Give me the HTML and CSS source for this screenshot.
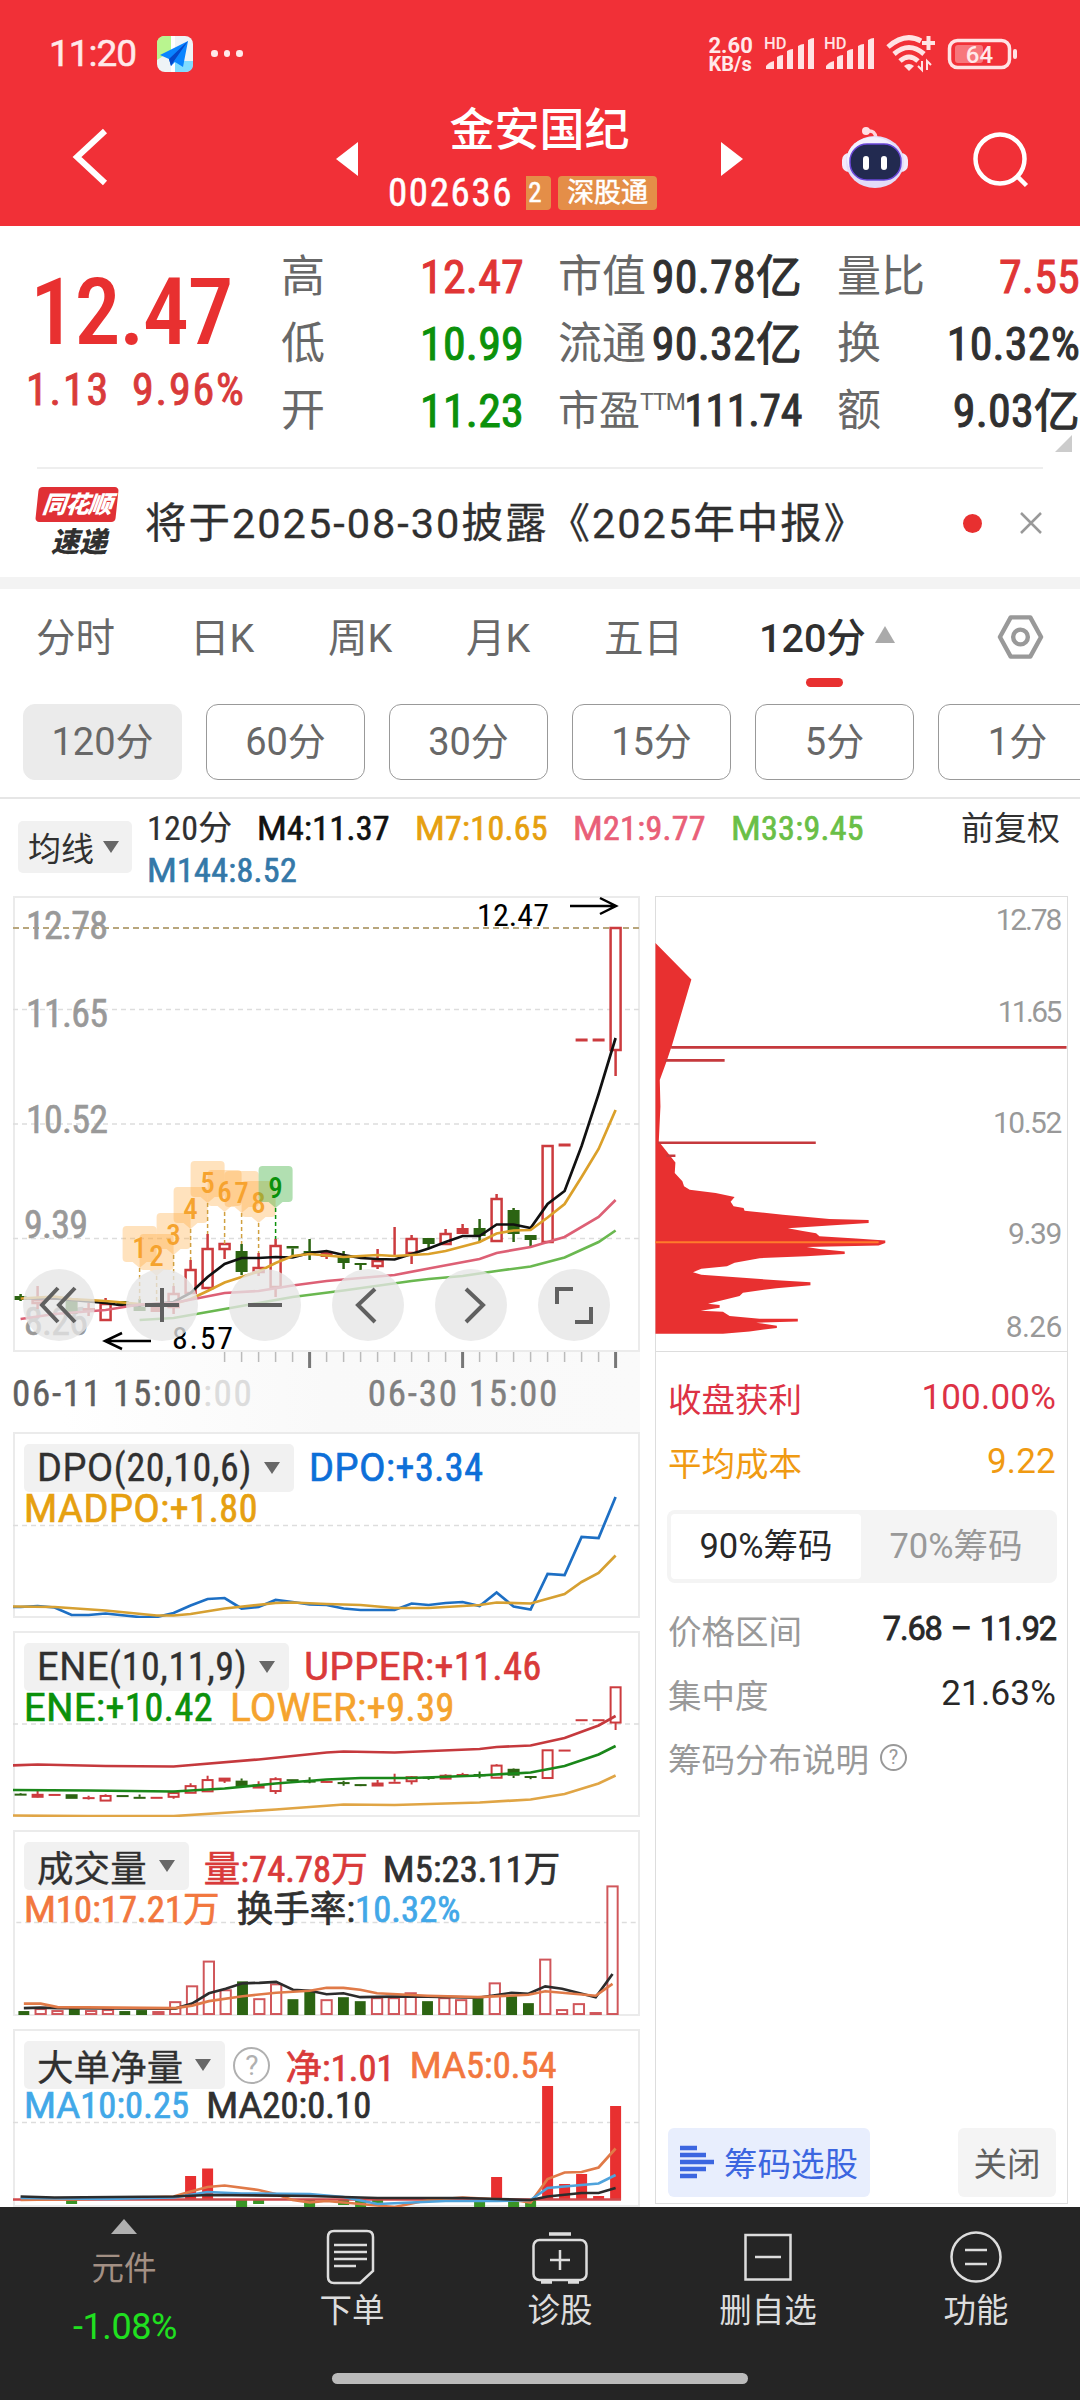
FILE: index.html
```
<!DOCTYPE html>
<html lang="zh-CN">
<head>
  <meta charset="UTF-8" />
  <meta name="viewport" content="width=device-width, initial-scale=1.0"/>
  <title>金安国纪 002636</title>
  <link rel="stylesheet" href="styles.css">
</head>
<body>

  <!-- Header -->
  <header>
    <div class="status-bar">
      <span class="clock">11:20</span>
      <svg class="map-icon" viewBox="0 0 36 36">
        <rect width="36" height="36" rx="8" fill="#eef3f6"/>
        <path d="M8 0H14V15L0 24V8Q0 0 8 0Z" fill="#b9f58f"/>
        <path d="M18 25H36V28Q36 36 28 36H18Z" fill="#7fdcff"/>
        <path d="M14 0H18V36H14Z" fill="#fff"/>
        <path d="M31 5L3 19L12 23L14 30L18 26L26 31Z" fill="#0a84ff"/>
        <path d="M31 5L12 23L14 30L17 25Z" fill="#0546c8"/>
      </svg>
      <span class="dots"><i></i><i></i><i></i></span>
      <span class="net-speed"><b>2.60</b><b>KB/s</b></span>
      <svg class="signal" viewBox="0 0 312 40">
        <g fill="#ffe3e4">
          <text x="0" y="13" class="hd">HD</text>
          <path d="M2 33v-3q3-4 8-5v8zM13 33V21q3-2 6-2v14zM23 33V15q3-2 6-2v20zM34 33V10q3-2 6-2v25zM44 33V4q3-2 6-2v31z"/>
          <text x="60" y="13" class="hd">HD</text>
          <path d="M62 33v-3q3-4 8-5v8zM73 33V21q3-2 6-2v14zM83 33V15q3-2 6-2v20zM94 33V10q3-2 6-2v25zM104 33V4q3-2 6-2v31z"/>
          <path d="M145 35l-5-5q5-4 10 0z"/>
          <path d="M158 25v9l-4-4M163 34v-9l4 4" stroke="#ffe3e4" stroke-width="2" fill="none"/>
        </g>
        <g fill="none" stroke="#ffe3e4" stroke-width="5">
          <path d="M124 11q17-15 33-6M130 18q15-13 30 0M136 25q9-8 18 0"/>
          <path d="M158 7h13M164.500 0v14" stroke-width="4"/>
        </g>
        <rect x="185.500" y="4.500" width="60" height="27" rx="8" fill="none" stroke="#ffe3e4" stroke-width="3.500"/>
        <rect x="191" y="9" width="28" height="18" rx="3" fill="#f7777c"/>
        <rect x="249" y="13" width="4" height="10" rx="2" fill="#ffe3e4"/>
        <text x="215.500" y="26.500" class="battery">64</text>
      </svg>
    </div>
    <div class="title-bar">
      <svg class="back" viewBox="0 0 40 60"><path d="M34 4L6 30L34 56"/></svg>
      <i class="prev"></i>
      <div class="title">
        <h1>金安国纪</h1>
        <div class="code">002636<em class="cut">2</em><em>深股通</em></div>
      </div>
      <i class="next"></i>
      <svg class="robot" viewBox="0 0 68 62">
        <path d="M35 12Q34 4 27 5" fill="none" stroke="#ffd6dd" stroke-width="3.500"/>
        <circle cx="25" cy="5" r="4" fill="#ffe0e6"/>
        <rect x="1" y="27" width="66" height="19" rx="7" fill="#f3e9fb"/>
        <ellipse cx="34" cy="36" rx="29" ry="26" fill="#e3dcf8"/>
        <ellipse cx="32" cy="33" rx="26" ry="22" fill="#f3f1fe"/>
        <rect x="9" y="18" width="51" height="36" rx="17" fill="#222a50" stroke="#6a47d8" stroke-width="1.500"/>
        <path d="M25 33v8M43 33v8" stroke="#fff" stroke-width="6" stroke-linecap="round"/>
      </svg>
      <svg class="search" viewBox="0 0 60 60"><circle cx="28" cy="28" r="24.500"/><path d="M45 45L54.500 54.500"/></svg>
    </div>
  </header>

  <!-- Quote -->
  <section class="quote">
    <div class="price">
      <strong>12.47</strong>
      <div><span>1.13</span><span>9.96%</span></div>
    </div>
    <dl class="col-a">
      <dt>高</dt><dd class="up">12.47</dd>
      <dt>低</dt><dd class="down">10.99</dd>
      <dt>开</dt><dd class="down">11.23</dd>
    </dl>
    <dl class="col-b">
      <dt>市值</dt><dd>90.78亿</dd>
      <dt>流通</dt><dd>90.32亿</dd>
      <dt class="ttm">市盈<sup>TTM</sup></dt><dd class="pe">111.74</dd>
    </dl>
    <dl class="col-c">
      <dt>量比</dt><dd class="up">7.55</dd>
      <dt>换</dt><dd>10.32%</dd>
      <dt>额</dt><dd>9.03亿</dd>
    </dl>
    <i class="corner"></i>
  </section>

  <!-- News -->
  <section class="news">
    <div class="news-logo"><b>同花顺</b><span>速递</span></div>
    <p>将于2025-08-30披露《2025年中报》</p>
    <i class="red-dot"></i>
    <svg class="close" viewBox="0 0 24 24"><path d="M2 2L22 22M22 2L2 22"/></svg>
  </section>

  <!-- Period tabs -->
  <nav class="tabs">
    <a>分时</a><a>日K</a><a>周K</a><a>月K</a><a>五日</a><a class="active">120分</a>
    <i class="tri-up"></i>
    <svg class="setting" viewBox="0 0 48 46"><path d="M14 3H34L45 23L34 43H14L3 23Z"/><circle cx="24" cy="23" r="7.500"/></svg>
  </nav>
  <div class="periods">
    <a class="active">120分</a><a>60分</a><a>30分</a><a>15分</a><a>5分</a><a>1分</a>
  </div>

  <!-- Moving average legend -->
  <div class="legend">
    <span class="chip">均线<i class="tri"></i></span>
    <div class="legend-items">
      <span class="c-dark">120分</span><span class="c-black"><b>M</b>4:11.37</span><span class="c-gold"><b>M</b>7:10.65</span><span class="c-pink"><b>M</b>21:9.77</span><span class="c-lime"><b>M</b>33:9.45</span><span class="c-steel"><b>M</b>144:8.52</span>
    </div>
    <span class="fq">前复权</span>
  </div>

  <!-- Charts -->
  <main>
    <div class="left">
      <div class="panel kline">
        <svg id="kline" viewBox="13 896 627 456"></svg>
        <div class="tools">
          <button><svg viewBox="0 0 72 72"><path d="M35 19L19 36L35 53M52 19L36 36L52 53"/></svg></button>
          <button><svg viewBox="0 0 72 72"><path d="M36 19V53M19 36H53"/></svg></button>
          <button><svg viewBox="0 0 72 72"><path d="M19 36H53"/></svg></button>
          <button><svg viewBox="0 0 72 72"><path d="M43 20L26 36L43 53"/></svg></button>
          <button><svg viewBox="0 0 72 72"><path d="M31 20L48 36L31 53"/></svg></button>
          <button><svg viewBox="0 0 72 72"><path d="M19 35V20H35M37 53H53V38"/></svg></button>
        </div>
      </div>
      <div class="axis">
        <svg id="ticks" viewBox="13 1352 627 18"></svg>
        <div class="dates"><span>06-11 15:00<s>:00</s></span><span class="d2">06-30 15:00</span></div>
      </div>

      <div class="panel">
        <svg id="dpo" viewBox="13 1432 627 186"></svg>
        <div class="info">
          <span class="chip"><span><b>DPO</b>(20,10,6)</span><i class="tri"></i></span><span class="c-blue"><b>DPO</b>:+3.34</span>
        </div>
        <div class="info"><span class="c-gold"><b>MADPO</b>:+1.80</span></div>
      </div>

      <div class="panel">
        <svg id="ene" viewBox="13 1631 627 186"></svg>
        <div class="info">
          <span class="chip"><span><b>ENE</b>(10,11,9)</span><i class="tri"></i></span><span class="c-red"><b>UPPER</b>:+11.46</span>
        </div>
        <div class="info"><span class="c-green"><b>ENE</b>:+10.42</span><span class="c-amber"><b>LOWER</b>:+9.39</span></div>
      </div>

      <div class="panel">
        <svg id="vol" viewBox="13 1830 627 188"></svg>
        <div class="info num">
          <span class="chip">成交量<i class="tri"></i></span><span class="c-red">量:74.78万</span><span class="c-dark"><b>M</b>5:23.11万</span>
        </div>
        <div class="info num"><span class="c-orange"><b>M</b>10:17.21万</span><span class="c-dark">换手率:<span class="c-sky">10.32%</span></span></div>
      </div>

      <div class="panel last">
        <svg id="net" viewBox="13 2029 627 178"></svg>
        <div class="info num">
          <span class="chip">大单净量<i class="tri"></i></span><i class="help">?</i><span class="c-red">净:1.01</span><span class="c-orange"><b>MA</b>5:0.54</span>
        </div>
        <div class="info num"><span class="c-sky"><b>MA</b>10:0.25</span><span class="c-dark"><b>MA</b>20:0.10</span></div>
      </div>
    </div>

    <!-- Chip distribution -->
    <aside>
      <svg class="chips" viewBox="47 47 1236 1368">
        <path fill="#e83030" d="M47 188L155 298L97 495L80 545L60 600L62 680L57 785L88 824L107 848L105 880L128 905L133 920L150 930L228 940L285 952L273 966L282 980L312 985L315 993L430 1005L570 1018L688 1021V1030L570 1038L445 1046L490 1054L530 1061L540 1070L650 1077L738 1083V1090L718 1098L502 1102L540 1108L616 1116V1123L500 1130L360 1136L285 1150L262 1160L185 1168L160 1178L185 1186L310 1195L425 1203L513 1208V1217L410 1226L310 1240L300 1250L245 1263L205 1273L240 1277V1285L183 1294L250 1297L270 1310L360 1318H475V1326L350 1330L412 1339V1346L330 1356L250 1363H47Z"/>
        <path stroke="#c5393d" stroke-width="8" d="M94 502H1283M76 541H255M55 789H529M80 828H107"/>
        <path stroke="#ff7a2b" stroke-width="6" d="M47 1088H718"/>
        <g class="chip-label">
          <text x="1270" y="150" textLength="200">12.78</text>
          <text x="1270" y="427" textLength="194">11.65</text>
          <text x="1270" y="760" textLength="208">10.52</text>
          <text x="1270" y="1092" textLength="163">9.39</text>
          <text x="1270" y="1372" textLength="170">8.26</text>
        </g>
      </svg>
      <div class="stats">
        <div class="row c-crimson"><span>收盘获利</span><b>100.00%</b></div>
        <div class="row c-cost"><span>平均成本</span><b>9.22</b></div>
        <div class="seg"><a class="active">90%筹码</a><a>70%筹码</a></div>
        <div class="row"><span>价格区间</span><b class="range">7.68 – 11.92</b></div>
        <div class="row"><span>集中度</span><b>21.63%</b></div>
        <div class="row"><span>筹码分布说明<i class="help small">?</i></span></div>
      </div>
      <div class="actions">
        <button class="pick">
          <svg viewBox="0 0 34 34"><path d="M0 3H17M0 10H26M0 17H34M0 24H26M0 31H17"/></svg>筹码选股
        </button>
        <button class="off">关闭</button>
      </div>
    </aside>
  </main>

  <!-- Bottom bar -->
  <footer>
    <div class="item sector"><i class="tri-up"></i><span>元件</span><b>-1.08%</b></div>
    <div class="item">
      <svg viewBox="0 0 60 60"><path d="M12 4H45Q51 4 51 10V44L38 56H12Q6 56 6 50V10Q6 4 12 4Z"/><path d="M12 18H45M12 25H45M12 32H45M12 39H34"/></svg>
      <span>下单</span>
    </div>
    <div class="item">
      <svg viewBox="0 0 60 60"><rect x="3.500" y="13" width="53" height="40" rx="6"/><path d="M19 7H41M11 55H22M38 55H49" stroke-width="3.500"/><path d="M30 23V43M20 33H40"/></svg>
      <span>诊股</span>
    </div>
    <div class="item">
      <svg viewBox="0 0 60 60"><rect x="7.500" y="8" width="45" height="44.500"/><path d="M17 30H43"/></svg>
      <span>删自选</span>
    </div>
    <div class="item">
      <svg viewBox="0 0 60 60"><circle cx="30" cy="30" r="24.500"/><path d="M19 23H41M19 37H41"/></svg>
      <span>功能</span>
    </div>
    <i class="home"></i>
  </footer>

  <script src="charts.js"></script>
</body>
</html>
```
FILE: styles.css
```
* {
  margin: 0;
  padding: 0;
  box-sizing: border-box;
}
body {
  width: 1080px;
  height: 2400px;
  overflow: hidden;
  background: #fff;
  color: #303030;
  font-family: "Roboto Condensed", "Noto Sans CJK SC", sans-serif;
}
i, em {
  font-style: normal;
}
svg {
  display: block;
}
button {
  border: none;
  font-family: inherit;
}

/* Header */
header {
  height: 226px;
  background: #f13037;
  color: #fff;
}
.status-bar {
  height: 73px;
  padding: 34px 0 0 49px;
  display: flex;
  align-items: center;
  color: #ffe9ea;
}
.clock {
  width: 108px;
  font: 400 37px Roboto, sans-serif;
  letter-spacing: -1px;
  -webkit-text-stroke: .5px;
}
.map-icon {
  width: 36px;
  height: 36px;
}
.dots {
  display: flex;
  gap: 6px;
  margin-left: 18px;
}
.dots i {
  width: 6.500px;
  height: 6.500px;
  border-radius: 50%;
  background: #ffe9ea;
}
.net-speed {
  margin-left: 466px;
  width: 55px;
  font: 20px/19px Roboto, sans-serif;
  padding-top: 3px;
}
.net-speed b {
  display: block;
  font-weight: 700;
  white-space: nowrap;
}
.net-speed b:first-child {
  font-size: 22px;
}
.signal {
  width: 312px;
  height: 40px;
  margin-top: 4px;
  flex: none;
  overflow: visible;
}
.hd {
  font: 500 16.500px Roboto, sans-serif;
}
.battery {
  font: 500 24px Roboto, sans-serif;
  fill: #ffe9ea;
  text-anchor: middle;
}
.title-bar {
  display: flex;
  align-items: flex-start;
  padding-left: 71px;
  height: 153px;
}
.back {
  width: 40px;
  height: 60px;
  margin-top: 54px;
  fill: none;
  stroke: #fff;
  stroke-width: 6px;
}
.prev, .next {
  margin-top: 69px;
  border: 17px solid transparent;
}
.prev {
  margin-left: 225px;
  border-left: none;
  border-right: 22px solid #fff;
}
.next {
  border-right: none;
  border-left: 22px solid #fff;
}
.title {
  width: 363px;
  text-align: center;
}
.title h1 {
  margin-top: 34px;
  font-size: 45px;
  line-height: 48px;
  font-weight: 500;
}
.code {
  display: flex;
  align-items: center;
  margin: 20px 0 0 30px;
  height: 36px;
  font-size: 39px;
  letter-spacing: 1.600px;
  -webkit-text-stroke: .5px;
}
.code em {
  height: 34px;
  margin-left: 7px;
  padding: 0 9px;
  border-radius: 4px;
  background: #e48e48;
  font-size: 27px;
  line-height: 34px;
  letter-spacing: 0;
}
.code .cut {
  margin-left: 13px;
  width: 25px;
  padding: 0 2px;
  border-radius: 0 4px 4px 0;
  text-align: left;
}
.robot {
  width: 68px;
  height: 62px;
  margin: 53px 0 0 98px;
}
.search {
  width: 60px;
  height: 60px;
  margin: 58px 0 0 63px;
  fill: none;
  stroke: #fff;
  stroke-width: 4.500px;
}

/* Quote */
.quote {
  position: relative;
  display: flex;
  height: 241px;
  padding-top: 18px;
}
.price {
  width: 281px;
  padding-left: 26px;
  color: #d93a3a;
}
.price strong {
  display: block;
  padding-left: 4px;
  margin-top: 19px;
  color: #e83030;
  font-size: 92px;
  line-height: 100px;
  font-weight: 500;
  letter-spacing: -1.500px;
}
.price div {
  display: flex;
  gap: 22px;
  margin-top: 2px;
  font-size: 44px;
  line-height: 50px;
  letter-spacing: 1.800px;
  -webkit-text-stroke: .9px;
}
dl {
  display: grid;
  grid-template-columns: 88px 1fr;
  grid-auto-rows: 67px;
  line-height: 66px;
  white-space: nowrap;
}
dt {
  color: #686868;
  font-size: 44px;
}
dd {
  text-align: right;
  font-size: 46px;
  letter-spacing: .2px;
  -webkit-text-stroke: 1px;
}
sup {
  font-size: 23px;
  line-height: 0;
  vertical-align: 15px;
  font-family: Roboto, sans-serif;
  letter-spacing: -1px;
}
.col-a {
  width: 243px;
}
.col-b {
  width: 244px;
  margin-left: 34px;
}
.ttm {
  font-size: 41px;
}
dd.pe {
  font-size: 44px;
  letter-spacing: -.4px;
}
.col-c {
  width: 243px;
  margin-left: 35px;
}
.up {
  color: #e03535;
}
.down {
  color: #0b910b;
}
.corner {
  position: absolute;
  right: 8px;
  bottom: 15px;
  border-left: 17px solid transparent;
  border-bottom: 17px solid #ccc;
}

/* News */
.news {
  display: flex;
  align-items: center;
  height: 110px;
  margin: 0 37px;
  border-top: 2px solid #eee;
}
.news-logo {
  width: 84px;
  margin-top: -4px;
  text-align: center;
  font-style: italic;
  font-family: "Noto Sans CJK SC", sans-serif;
}
.news-logo b {
  display: block;
  width: 80px;
  height: 35px;
  border-radius: 4px;
  background: #e03035;
  color: #fff;
  font-size: 24px;
  line-height: 32px;
  font-weight: 900;
  letter-spacing: -1px;
  transform: skewX(-6deg);
}
.news-logo span {
  display: block;
  margin-top: 2px;
  font-size: 28px;
  line-height: 32px;
  font-weight: 900;
}
.news p {
  margin: -7px 0 0 24px;
  width: 791px;
  font-size: 41.500px;
  letter-spacing: 2px;
  white-space: nowrap;
  font-family: Roboto, "Noto Sans CJK SC", sans-serif;
  -webkit-text-stroke: .3px;
}
.red-dot {
  width: 19px;
  height: 19px;
  flex: none;
  margin-left: 28px;
  border-radius: 50%;
  background: #e83030;
}
.close {
  width: 24px;
  height: 24px;
  flex: none;
  margin-left: 37px;
  stroke: #999;
  stroke-width: 2.500px;
}

/* Tabs */
.tabs {
  display: flex;
  align-items: center;
  height: 127px;
  padding: 0 36px 25px;
  border-top: 12px solid #f3f3f3;
  color: #686868;
  font-size: 39.500px;
  font-family: Roboto, "Noto Sans CJK SC", sans-serif;
}
.tabs a {
  width: 138px;
  flex: none;
}
.tabs a:nth-child(1) {
  width: 154px;
}
.tabs a:nth-child(5) {
  width: 155px;
}
.tabs .active {
  position: relative;
  width: 116px;
  color: #303030;
  font-weight: 500;
}
.tabs .active::after {
  content: "";
  position: absolute;
  left: 47px;
  bottom: -24px;
  width: 37px;
  height: 9px;
  border-radius: 5px;
  background: #e83030;
}
.tri-up {
  border: 10px solid transparent;
  border-top: none;
  border-bottom: 17px solid #aaa;
}
.setting {
  width: 48px;
  height: 46px;
  margin: 6px 0 0 102px;
  fill: none;
  stroke: #999;
  stroke-width: 4.500px;
  stroke-linejoin: round;
}
.periods {
  display: flex;
  gap: 24px;
  height: 95px;
  padding-left: 23px;
  border-bottom: 2px solid #e6e6e6;
}
.periods a {
  flex: none;
  width: 159px;
  height: 76px;
  border: 1.500px solid #999;
  border-radius: 12px;
  color: #686868;
  font: 38px/75px Roboto, "Noto Sans CJK SC", sans-serif;
  text-align: center;
}
.periods .active {
  border-color: #ebebeb;
  background: #ebebeb;
}

/* Legend */
.chip {
  display: flex;
  align-items: center;
  border-radius: 5px;
  background: #f1f1f1;
  color: #303030;
}
.tri {
  border: 8.500px solid transparent;
  border-bottom: none;
  border-top: 12px solid #686868;
}
.legend {
  display: flex;
  height: 97px;
  padding: 8px 20px 0 18px;
  font-size: 34px;
}
.legend .chip {
  width: 114px;
  height: 52px;
  margin: 14px 15px 0 0;
  padding-left: 10px;
  gap: 9px;
  font-size: 33px;
}
.legend-items {
  display: flex;
  flex-wrap: wrap;
  align-content: flex-start;
  width: 814px;
  line-height: 42px;
  letter-spacing: .3px;
  -webkit-text-stroke: .7px;
}
.legend-items span {
  width: 158px;
}
.legend-items span:first-child {
  width: 110px;
  -webkit-text-stroke: .2px;
}
.legend b, .info b {
  font-family: Roboto, sans-serif;
  font-weight: 400;
}
.fq {
  font-size: 33px;
  line-height: 43px;
  white-space: nowrap;
}

.c-dark { color: #303030; }
.c-black { color: #111; }
.c-gold { color: #e6a010; }
.c-pink { color: #e95f78; }
.c-lime { color: #6abf47; }
.c-steel { color: #3478a8; }
.c-blue { color: #0d6fd8; }
.c-red { color: #d93a3a; }
.c-green { color: #0b910b; }
.c-amber { color: #f5a32e; }
.c-orange { color: #f2773e; }
.c-sky { color: #42a8e8; }
.stats .c-crimson { color: #dd3245; }
.stats .c-cost { color: #f09a12; }

/* Charts */
main {
  display: flex;
  justify-content: space-between;
  height: 1311px;
  padding: 0 12px 0 13px;
}
.left {
  width: 627px;
}
.panel {
  position: relative;
  height: 186px;
  margin-bottom: 13px;
  padding-top: 12px;
  outline: 2px solid #ebebeb;
  outline-offset: -2px;
}
.panel > svg {
  position: absolute;
  left: 0;
  top: 0;
  width: 100%;
  height: 100%;
}
.kline {
  height: 456px;
  margin: 0;
}
.last {
  height: 178px;
  margin: 0;
}
.tools {
  position: absolute;
  left: 10px;
  top: 373px;
  display: flex;
  gap: 31px;
}
.tools button {
  width: 72px;
  height: 72px;
  border-radius: 50%;
  background: rgba(230, 230, 230, .78);
}
.tools svg {
  fill: none;
  stroke: #606060;
  stroke-width: 4px;
}
.axis {
  height: 80px;
  background: linear-gradient(90deg, #fff 8%, #f9f9f9 50%, #fafafa);
}
.axis svg {
  height: 18px;
}
.dates {
  display: flex;
  justify-content: space-between;
  margin: 2px 0 0 -1px;
  color: #606060;
  font-size: 37px;
  line-height: 44px;
  letter-spacing: 1.700px;
  -webkit-text-stroke: .4px;
}
.dates s {
  color: #dcdcdc;
  text-decoration: none;
}
.dates .d2 {
  margin-right: 81px;
  color: #808080;
}
.info {
  position: relative;
  display: flex;
  align-items: center;
  height: 34px;
  padding-left: 11px;
  gap: 17px;
  font-size: 38px;
  letter-spacing: .6px;
  white-space: nowrap;
  -webkit-text-stroke: .7px;
}
.info:nth-of-type(1) {
  height: 48px;
  gap: 15px;
}
.info .chip {
  height: 48px;
  padding: 0 14px 0 13px;
  gap: 12px;
  -webkit-text-stroke: .3px;
}
.num {
  height: 32px;
  font-size: 36.500px;
  letter-spacing: .1px;
}
.help {
  width: 37px;
  height: 37px;
  margin-left: -7px;
  border: 2px solid #b0b0b0;
  border-radius: 50%;
  color: #b0b0b0;
  font: 400 28px/33px Roboto, sans-serif;
  text-align: center;
  -webkit-text-stroke: 0;
}

/* Chart text */
.price-label {
  font-size: 38px;
  fill: #999;
  stroke: #999;
  stroke-width: .6px;
}
.mark {
  font-size: 32px;
  fill: #000;
}
.count {
  font-size: 29px;
  font-weight: 500;
  text-anchor: middle;
}

/* Chip distribution */
aside {
  position: relative;
  width: 413px;
  height: 1308px;
  border: 1.500px solid #ddd;
}
.chips {
  width: 412px;
  height: 456px;
  margin: -1px 0 0 -1px;
  border-bottom: 1.500px solid #ddd;
}
.chip-label {
  font: 90px Roboto, sans-serif;
  fill: #999;
  text-anchor: end;
}
.stats {
  padding: 13px 11px 0 12px;
  color: #999;
  font: 33.500px Roboto, "Noto Sans CJK SC", sans-serif;
}
.row {
  display: flex;
  justify-content: space-between;
  align-items: center;
  height: 64px;
}
.row span {
  display: flex;
  align-items: center;
}
.row b {
  font-size: 35px;
  font-weight: 400;
  letter-spacing: .2px;
}
.row:nth-child(n+3) b {
  color: #282828;
}
.row .range {
  font-size: 32.500px;
  letter-spacing: -1.100px;
  word-spacing: 2px;
  -webkit-text-stroke: .8px;
}
.seg {
  display: flex;
  height: 73px;
  margin: 17px -1px 14px;
  padding: 4px;
  border-radius: 8px;
  background: #f4f4f4;
}
.seg a {
  width: 190px;
  font-size: 34.500px;
  line-height: 65px;
  text-align: center;
}
.seg .active {
  border-radius: 4px;
  background: #fff;
  color: #282828;
}
.help.small {
  width: 27px;
  height: 27px;
  margin-left: 11px;
  border-color: #999;
  color: #999;
  font-size: 20px;
  line-height: 23px;
}
.actions {
  position: absolute;
  left: 12px;
  right: 11px;
  bottom: 6px;
  display: flex;
  justify-content: space-between;
}
.actions button {
  display: flex;
  align-items: center;
  justify-content: center;
  height: 69px;
  padding-bottom: 2px;
  border-radius: 6px;
  font-size: 33.500px;
}
.pick {
  width: 202px;
  gap: 10px;
  background: #e8eefd;
  color: #3c66e0;
}
.pick svg {
  width: 34px;
  stroke: #3c66e0;
  stroke-width: 4.500px;
}
.off {
  width: 98px;
  background: #f4f4f4;
  color: #606060;
}

/* Bottom bar */
footer {
  position: relative;
  display: flex;
  height: 193px;
  padding-left: 20px;
  background: #252525;
}
.item {
  width: 208px;
  padding-top: 20px;
  color: #ddd;
  font-size: 32.500px;
  line-height: 44px;
  text-align: center;
}
.item svg {
  width: 60px;
  height: 60px;
  margin: 0 auto 2px;
  fill: none;
  stroke: #ddd;
  stroke-width: 2.500px;
}
.item span {
  display: block;
}
.sector {
  margin-right: 20px;
  padding-top: 12px;
}
.sector .tri-up {
  display: block;
  width: 0;
  margin: 0 auto 13px;
  border-width: 0 13px 15px;
  border-bottom-color: #b0b0b0;
}
.sector span {
  color: #a39084;
}
.sector b {
  display: block;
  margin-top: 14px;
  padding-left: 2px;
  color: #20e020;
  font: 400 36px/44px Roboto, sans-serif;
  letter-spacing: -.4px;
}
.home {
  position: absolute;
  left: 332px;
  bottom: 16px;
  width: 416px;
  height: 11px;
  border-radius: 6px;
  background: #bbb;
}
```
FILE: charts.js
```
const RED = '#cc3b3e', GREEN = '#2c6412';
const X0 = 20.6, STEP = 17;
const x = i => X0 + STEP * i;

// [color, high, top, bottom, low]
const candles = [
  ['g', 1294, 1296, 1300, 1301], ['r', 1286, 1300, 1303, 1309], ['s', 1297, 1297, 1300, 1300],
  ['g', 1298, 1298, 1314, 1314], ['s', 1303, 1308, 1312, 1316], ['r', 1298, 1304, 1320, 1321],
  ['g', 1301, 1301, 1306, 1306], ['g', 1299, 1307, 1311, 1311], ['s', 1307, 1307, 1312, 1312],
  ['r', 1286, 1294, 1307, 1314], ['r', 1260, 1270, 1293, 1293], ['r', 1234, 1249, 1288, 1288],
  ['r', 1244, 1244, 1249, 1259], ['g', 1244, 1251, 1272, 1275], ['r', 1253, 1268, 1272, 1276],
  ['r', 1239, 1246, 1287, 1297], ['g', 1246, 1246, 1248.5, 1258], ['g', 1239, 1251, 1255, 1260],
  ['s', 1252, 1252, 1257, 1259], ['g', 1251, 1256, 1263, 1269], ['g', 1263, 1263, 1265, 1270],
  ['r', 1249, 1261, 1266, 1269], ['s', 1227, 1255, 1257, 1257], ['r', 1235, 1239, 1253, 1264],
  ['g', 1238, 1238, 1244, 1248], ['r', 1229, 1234, 1244, 1244], ['s', 1224, 1228, 1234, 1234],
  ['g', 1219, 1228, 1236, 1243], ['r', 1194, 1199, 1241, 1241], ['g', 1208, 1210, 1234, 1242],
  ['g', 1235, 1235, 1240, 1246], ['r', 1145, 1146, 1242, 1242], ['s', 1143.5, 1143.5, 1146.5, 1146.5],
  ['s', 1038.5, 1038.5, 1041.5, 1041.5], ['s', 1038.5, 1038.5, 1041.5, 1041.5], ['r', 927, 928, 1050, 1076]
];

function drawCandles(map, lw) {
  return candles.map(([c, h, t, b, l], i) => {
    const color = c === 'g' ? GREEN : RED, w = 12;
    [h, t, b, l] = [h, t, b, l].map(map);
    const hgt = Math.max(b - t, 2);
    let s = `<path d="M${x(i)} ${h}V${t}M${x(i)} ${b}V${l}" stroke="${color}" stroke-width="${lw}"/>`;
    if (c === 'r') s += `<rect x="${x(i) - w / 2 + 1}" y="${t}" width="${w - 2}" height="${hgt}" fill="#fff" stroke="${color}" stroke-width="${lw}"/>`;
    else s += `<rect x="${x(i) - w / 2}" y="${t}" width="${w}" height="${hgt}" fill="${color}"/>`;
    return s;
  }).join('');
}

// points: flat list of index, y, index, y ...
function line(color, pts) {
  let p = '';
  for (let k = 0; k < pts.length; k += 2) p += x(pts[k]) + ',' + pts[k + 1] + ' ';
  return `<polyline points="${p}" fill="none" stroke="${color}" stroke-width="2.700"/>`;
}

function grid(...ys) {
  return ys.map(y => `<path d="M13 ${y}H640" stroke="#ddd" stroke-width="1.500" stroke-dasharray="5 4"/>`).join('');
}

function put(id, html) {
  document.getElementById(id).innerHTML = html;
}

// Nine-count bubbles above the candles
function bubbles() {
  const tops = [1226, 1234, 1213, 1187, 1161, 1170, 1171, 1181, 1166];
  const ends = [1300, 1307, 1286, 1260, 1234, 1244, 1244, 1253, 1239];
  return tops.map((t, k) => {
    const cx = x(k + 7), last = k === 8;
    const fill = last ? 'rgba(60,176,60,.4)' : 'rgba(255,166,50,.32)';
    return `<path d="M${cx} ${t + 42}V${ends[k]}" stroke="${last ? '#0b910b' : '#d0a040'}" stroke-width="1.500" stroke-dasharray="4 3"/>
      <path d="M${cx - 13} ${t}h26q4 0 4 4v28q0 4 -4 4h-6l-7 6l-7 -6h-6q-4 0 -4 -4v-28q0 -4 4 -4z" fill="${fill}"/>
      <text x="${cx}" y="${t + 32}" class="count" fill="${last ? '#0b910b' : '#f5a32e'}">${k + 1}</text>`;
  }).join('');
}

put('kline',
  grid(1009.5, 1124, 1238.5) +
  '<path d="M13 928H640" stroke="#b8a67c" stroke-width="2" stroke-dasharray="6 4"/>' +
  [['12.78', 939], ['11.65', 1027], ['10.52', 1133]].map(([t, y]) => `<text x="26" y="${y}" class="price-label" textLength="82">${t}</text>`).join('') +
  [['9.39', 1238], ['8.26', 1335]].map(([t, y]) => `<text x="24" y="${y}" class="price-label" textLength="64">${t}</text>`).join('') +
  drawCandles(y => y, 2.5) +
  line('#111', [0, 1298.5, 2, 1298.5, 5, 1303, 6, 1305.5, 7, 1305.5, 9, 1302, 10, 1293, 11, 1277, 12, 1264, 13, 1258, 14, 1258, 15, 1257, 16, 1257.5, 17, 1253, 18, 1251, 19, 1255, 20, 1258, 21, 1259, 22, 1259.5, 23, 1254, 24, 1248.5, 25, 1242, 26, 1236, 27, 1236, 28, 1224.5, 29, 1224.5, 30, 1228, 31, 1204, 32, 1191, 33, 1146, 34, 1094, 35, 1038]) +
  line('#dba02a', [0, 1298.5, 2, 1296.5, 3, 1299, 5, 1301, 7, 1304, 8, 1305, 9, 1304, 10, 1299, 11, 1291, 12, 1282.5, 13, 1277, 14, 1271.5, 15, 1263, 16, 1256, 17, 1254, 19, 1257, 20, 1256, 21, 1255, 22, 1256, 24, 1254, 25, 1251, 27, 1242, 28, 1233.5, 29, 1230.5, 30, 1230, 31, 1217.5, 32, 1204, 33, 1177, 34, 1149, 35, 1110]) +
  line('#dd6075', [0, 1319, 2, 1314, 5, 1310, 7, 1304.5, 9, 1303, 12, 1293, 14, 1291, 16, 1285.5, 18, 1281, 20, 1278, 22, 1275, 24, 1268.5, 27, 1259, 28, 1253, 30, 1247, 32, 1237, 34, 1217, 35, 1200]) +
  line('#6ab850', [7, 1320, 9, 1318, 10.5, 1313.5, 13, 1306, 16, 1297, 19, 1290.5, 23, 1281, 24, 1279, 26, 1276, 28, 1271, 30, 1266.5, 32, 1257.5, 34, 1242, 35, 1230.5]) +
  bubbles() +
  '<path d="M570 906H615M600 898L616 906L600 914M151 1341H106M122 1333L105 1341L122 1349" fill="none" stroke="#000" stroke-width="2.5"/>' +
  '<text x="477" y="926" class="mark" textLength="72">12.47</text><text x="172" y="1349" class="mark" textLength="61">8.57</text>'
);

// Axis ticks, a longer one every ninth bar
let ticks = '';
for (let i = 12; i < 36; i++) {
  const big = (i - 17) % 9 === 0;
  ticks += `<path d="M${x(i)} 1352v${big ? 16 : 10}" stroke="${big ? '#777' : '#bbb'}" stroke-width="${big ? 3 : 1.5}"/>`;
}
put('ticks', ticks);

put('dpo',
  grid(1525.5) +
  line('#1d6fc4', [-.5, 1607, 0, 1607, 1, 1606, 2, 1607.5, 3, 1615, 4, 1615, 5, 1613.5, 7, 1617, 8, 1617, 9, 1613, 10, 1605.5, 11, 1599, 12, 1598, 13, 1608.5, 14, 1607, 15, 1600, 16, 1602, 17, 1604.5, 18, 1605, 19, 1608.5, 20, 1610, 22, 1610, 23, 1603.5, 24, 1605, 25, 1603, 26, 1602, 27, 1606, 28, 1592.5, 29, 1606.5, 30, 1609.5, 31, 1574, 32, 1575, 33, 1537, 34, 1538, 35, 1497]) +
  line('#d6a032', [-.5, 1606.5, 2, 1607, 5, 1610.5, 8, 1615.5, 9, 1615.5, 10, 1614, 12, 1608.5, 15, 1603, 16, 1602.5, 18, 1604, 20, 1605, 22, 1608, 24, 1608, 27, 1605, 28, 1602.5, 30, 1603.5, 32, 1594, 33, 1582, 34, 1573, 35, 1555.5])
);

put('ene',
  grid(1724) +
  drawCandles(y => 1687 + (y - 927) * .289, 2) +
  line('#c5393d', [-.5, 1765.5, 1, 1764.5, 5, 1766, 9, 1766.5, 14, 1759.5, 18, 1752.5, 19, 1751.5, 22, 1752.5, 27, 1749, 28, 1747, 30, 1745.5, 32, 1738, 34, 1725.5, 35, 1716]) +
  line('#1a871a', [-.5, 1790, 4, 1790.5, 9, 1791.5, 12, 1788.5, 15, 1783.5, 18, 1779.5, 20, 1778, 23, 1778, 27, 1775.5, 30, 1772.5, 32, 1766, 34, 1754.5, 35, 1746]) +
  line('#e0a545', [-.5, 1815.5, 4, 1816, 9, 1816, 15, 1809.5, 19, 1804.5, 22, 1805, 27, 1802.5, 30, 1799.5, 32, 1794, 34, 1783.5, 35, 1775.5])
);

// Volume
const volumes = [4, 7, 5, 7, 5, 6, 4, 5, 4, 14, 30, 55, 26, 34, 17, 32, 16, 24, 16, 18, 14, 18, 18, 23, 14, 18, 16, 17, 33, 19, 12, 57, 6, 12, 3, 131];
const falling = [0, 3, 6, 7, 13, 16, 17, 19, 20, 24, 27, 29, 30];
put('vol',
  grid(1923.5) +
  volumes.map((v, i) => falling.includes(i)
    ? `<rect x="${x(i) - 5.5}" y="${2017 - v}" width="11" height="${v}" fill="${GREEN}"/>`
    : `<rect x="${x(i) - 5.2}" y="${2018 - v}" width="10.4" height="${v - 2}" fill="#fff" stroke="#d0565a" stroke-width="2"/>`).join('') +
  line('#2c2c2c', [0, 2010, 1, 2009.5, 2, 2010, 9, 2010.5, 10, 2005.5, 11, 1995, 12, 1990.5, 13, 1985, 14, 1984.5, 15, 1983.5, 16, 1991.5, 17, 1992.5, 18, 1996, 19, 1995, 20, 1999, 22, 1998.5, 24, 1998.5, 27, 1999.5, 29, 1994.5, 30, 1995.5, 31, 1988, 32, 1990.5, 34, 1999, 35, 1975.5]) +
  line('#e07a48', [0, 2005.5, 1, 2005.5, 2, 2009, 9, 2010, 10, 2007.5, 11, 2003, 13, 1998, 15, 1994.5, 17, 1992.5, 18, 1989.5, 19, 1989.5, 20, 1991.5, 21, 1995, 24, 1997.5, 27, 1999, 30, 1996.5, 31, 1993, 34, 1997.5, 35, 1985.5])
);

// Large order net volume, drawn around a zero line
const net = {3: -4, 10: 24, 11: 31.5, 13: -8, 14: -4, 17: -8, 19: -5, 20: -7, 21: -5, 27: -8, 28: 23, 29: -8, 30: -8, 31: 114, 32: 16, 33: 26, 34: 4, 35: 94};
put('net',
  grid(2122.5) +
  Object.entries(net).map(([i, v]) => `<rect x="${x(+i) - 5.5}" y="${v > 0 ? 2200 - v : 2200}" width="11" height="${Math.abs(v)}" fill="${v > 0 ? '#e83030' : '#3a9426'}"/>`).join('') +
  '<path d="M13 2199.5H621" stroke="#d04a4c" stroke-width="2.5"/>' +
  line('#e07a48', [0, 2200, 4, 2199, 9, 2196.5, 10, 2191.5, 11, 2187, 12, 2185.5, 14, 2190, 15, 2194, 16, 2200, 17, 2202.5, 18, 2201, 20, 2204, 22, 2207, 24, 2200, 26, 2197.5, 29, 2200, 30, 2202.5, 31, 2179, 32, 2172.5, 33, 2172, 34, 2167.5, 35, 2148.5]) +
  line('#4fa3dc', [0, 2198, 5, 2199, 9, 2197.5, 11, 2192, 13, 2193.5, 17, 2194, 19, 2197, 21, 2204, 23, 2202.5, 25, 2201, 28, 2201, 30, 2200, 31, 2188, 34, 2183.5, 35, 2175]) +
  line('#2c2c2c', [0, 2196.5, 2, 2197.5, 9, 2196.5, 11, 2195, 17, 2196, 19, 2197, 21, 2198, 26, 2198, 28, 2199, 30, 2200, 31, 2196.5, 33, 2193, 34, 2193, 35, 2188])
);
```
